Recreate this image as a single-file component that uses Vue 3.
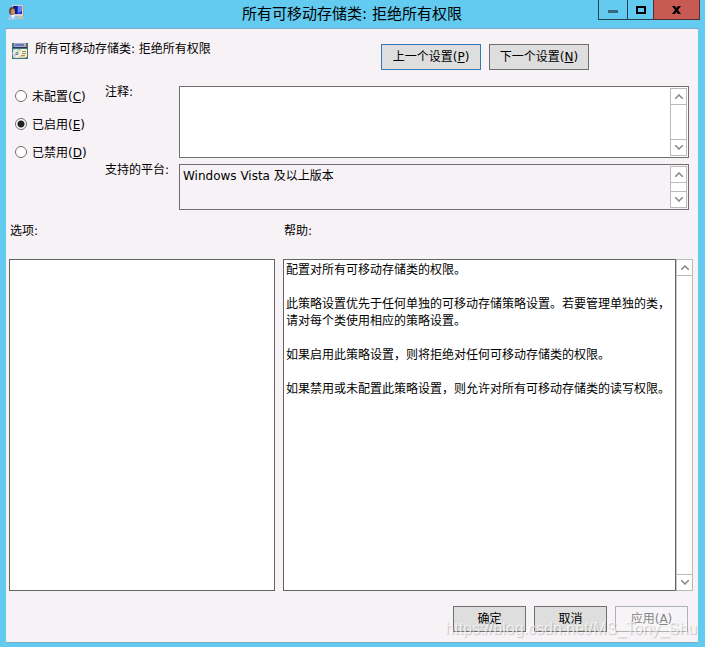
<template>
  <div class="window">
    <header class="title-bar">
      <svg class="app-icon" width="17" height="16" viewBox="0 0 17 16" aria-hidden="true">
        <path d="M4 0h12v11H4z" fill="#d8d2cc" />
        <path d="M15 0h1v11h-1z" fill="#a9a39f" />
        <path d="M5 1h9v8H5z" fill="#1a37d2" />
        <path d="M10 1h4v5l-4 2z" fill="#5a85f0" />
        <path d="M5 1h4v8H5z" fill="#0a1790" />
        <path d="M10 11h4v1h2v2H9z" fill="#c9beb2" />
        <path d="M0 15c0-3 1-5 4-5s5 2 5 5z" fill="#9cc6ee" />
        <path d="M3 10l2 4 2-4z" fill="#f2f8fd" />
        <ellipse cx="4" cy="6" rx="3" ry="4" fill="#6a4a30" />
        <ellipse cx="5" cy="7" rx="2" ry="3" fill="#c8935f" />
      </svg>
      <h1 class="title">{{ policyName }}</h1>
      <div class="window-controls">
        <button type="button" class="control minimize" aria-label="最小化">
          <svg width="10" height="3" viewBox="0 0 10 3"><path d="M0 0h10v3H0z" fill="#36677b" /></svg>
        </button>
        <button type="button" class="control maximize" aria-label="最大化">
          <svg width="10" height="8" viewBox="0 0 10 8"><path d="M1 1h8v6H1z" fill="none" stroke="#000" stroke-width="2" /></svg>
        </button>
        <button type="button" class="control close" aria-label="关闭">
          <svg width="9" height="8" viewBox="0 0 9 8"><path d="M0 0h3l1.500 2L6 0h3L6 4l3 4H6L4.500 6 3 8H0l3-4z" fill="#000" /></svg>
        </button>
      </div>
    </header>

    <main class="client">
      <div class="heading">
        <svg class="policy-icon" width="16" height="16" viewBox="0 0 16 16" aria-hidden="true">
          <path d="M0 0h16v16H0z" fill="#3d7580" />
          <path d="M2 0h12v4H2z" fill="#a7a9c9" />
          <path d="M3 1h9v2H3z" fill="#6679c2" />
          <path d="M12 1h2v2h-2z" fill="#d9b45c" />
          <path d="M1 4h14v1H1z" fill="#28365c" />
          <path d="M1 6h13v9H1z" fill="#b9c2bd" />
          <circle cx="5" cy="10.500" r="4.500" fill="#e9ece9" />
          <path d="M5 6a4.500 4.500 0 0 1 3 1L5 10z" fill="#b9dca4" />
          <path d="M1 12l4-2-2 4z" fill="#cfc3e0" />
          <circle cx="5" cy="10.500" r="1.500" fill="#6c7f77" />
          <circle cx="5" cy="10.500" r=".5" fill="#fff" />
          <path d="M9 6h6v8H8v-2h1z" fill="#fbf3cf" />
          <path d="M10 8.500h4M10 10.500h4M9 12.500h4" stroke="#9a8a5a" />
          <path d="M7 13h6v2H7z" fill="#e3d3a0" />
        </svg>
        <span class="policy-name">{{ policyName }}</span>
        <div class="nav-buttons">
          <button type="button" class="btn nav focused">上一个设置(<u>P</u>)</button>
          <button type="button" class="btn nav">下一个设置(<u>N</u>)</button>
        </div>
      </div>

      <div class="settings">
        <div class="states" role="radiogroup" aria-label="状态">
          <label v-for="item in states" :key="item.value" class="state">
            <input v-model="state" type="radio" name="state" :value="item.value" />
            <span>{{ item.label }}(<u>{{ item.key }}</u>)</span>
          </label>
        </div>

        <label class="field-label" for="comment">注释:</label>
        <div class="field comment">
          <textarea id="comment" v-model="comment"></textarea>
          <div class="scrollbar">
            <button type="button" aria-label="向上滚动"><svg width="8" height="5" viewBox="0 0 8 5"><path d="M0 5l4-4 4 4" /></svg></button>
            <button type="button" aria-label="向下滚动"><svg width="8" height="5" viewBox="0 0 8 5"><path d="M0 0l4 4 4-4" /></svg></button>
          </div>
        </div>

        <label class="field-label" for="platform">支持的平台:</label>
        <div class="field platform">
          <textarea id="platform" readonly :value="platform"></textarea>
          <div class="scrollbar">
            <button type="button" aria-label="向上滚动"><svg width="8" height="5" viewBox="0 0 8 5"><path d="M0 5l4-4 4 4" /></svg></button>
            <button type="button" aria-label="向下滚动"><svg width="8" height="5" viewBox="0 0 8 5"><path d="M0 0l4 4 4-4" /></svg></button>
          </div>
        </div>
      </div>

      <div class="panels">
        <section class="panel">
          <h2>选项:</h2>
          <div class="panel-row">
            <div class="box"></div>
          </div>
        </section>
        <section class="panel">
          <h2>帮助:</h2>
          <div class="panel-row">
            <div class="box help">
              <p v-for="(text, i) in helpText" :key="i">{{ text }}</p>
            </div>
            <div class="scrollbar outer">
              <button type="button" aria-label="向上滚动"><svg width="8" height="5" viewBox="0 0 8 5"><path d="M0 5l4-4 4 4" /></svg></button>
              <button type="button" aria-label="向下滚动"><svg width="8" height="5" viewBox="0 0 8 5"><path d="M0 0l4 4 4-4" /></svg></button>
            </div>
          </div>
        </section>
      </div>

      <footer class="actions">
        <button type="button" class="btn">确定</button>
        <button type="button" class="btn">取消</button>
        <button type="button" class="btn" disabled>应用(<u>A</u>)</button>
      </footer>
    </main>

    <div class="watermark">https://blog.csdn.net/MS_Tony_Shu</div>
  </div>
</template>

<script setup>
import { ref } from 'vue';

const policyName = '所有可移动存储类: 拒绝所有权限';
const platform = 'Windows Vista 及以上版本';

const states = [
  { value: 'none', label: '未配置', key: 'C' },
  { value: 'enabled', label: '已启用', key: 'E' },
  { value: 'disabled', label: '已禁用', key: 'D' },
];

const helpText = [
  '配置对所有可移动存储类的权限。',
  '此策略设置优先于任何单独的可移动存储策略设置。若要管理单独的类，请对每个类使用相应的策略设置。',
  '如果启用此策略设置，则将拒绝对任何可移动存储类的权限。',
  '如果禁用或未配置此策略设置，则允许对所有可移动存储类的读写权限。',
];

const state = ref('enabled');
const comment = ref('');
</script>

<style>
body {
  margin: 0;
}
</style>

<style scoped>
.window {
  position: relative;
  display: flex;
  flex-direction: column;
  box-sizing: border-box;
  min-height: 100vh;
  padding: 0 7px 4px 6px;
  background: #63caf0;
  color: #000;
  font-family: "DejaVu Sans", "Noto Sans CJK SC", sans-serif;
  font-size: 12px;
  line-height: 17px;
}

.window *,
.window *::before {
  box-sizing: border-box;
}

button,
textarea {
  margin: 0;
  font: inherit;
  color: inherit;
}

button {
  padding: 0;
}

/* Title bar */
.title-bar {
  display: grid;
  grid-template-columns: 104px 1fr 104px;
  height: 28px;
}

.app-icon {
  margin: 5px 0 0 2px;
}

.title {
  margin: 0;
  font-size: 15px;
  font-weight: 400;
  line-height: 28px;
  text-align: center;
  white-space: nowrap;
}

.window-controls {
  display: flex;
  justify-content: flex-end;
  height: 20px;
  margin-right: -2px;
}

.control {
  display: flex;
  align-items: center;
  justify-content: center;
  width: 29px;
  border: 1px solid #1f4351;
  border-top: 0;
  border-right: 0;
  background: #63caf0;
}

.maximize {
  width: 26px;
}

.minimize svg {
  margin-top: 4px;
}

.control.close {
  width: 47px;
  border: 1px solid #53302f;
  border-top: 0;
  background: #c75a52;
}

/* Client area */
.client {
  display: flex;
  flex: 1;
  flex-direction: column;
  border-top: 1px solid #7ba9c9;
  border-bottom: 1px solid #7ba9c9;
  background: #f7f2f6;
}

.heading {
  display: flex;
  align-items: flex-start;
  padding: 14px 109px 0 6px;
}

.policy-name {
  margin-left: 7px;
  line-height: 12px;
}

.nav-buttons {
  display: flex;
  gap: 8px;
  margin: 1px 0 0 auto;
}

.btn {
  width: 73px;
  height: 26px;
  padding-top: 1px;
  border: 1px solid #707070;
  background: #dedede;
}

.btn.nav {
  width: 100px;
}

.btn.focused {
  border-color: #337ab7;
}

.btn:disabled {
  border-color: #adb2b5;
  background: #f6f4f6;
  color: #858585;
}

.settings {
  display: grid;
  grid-template-columns: 99px 74px 1fr;
  row-gap: 6px;
  margin-top: 16px;
  padding-right: 9px;
}

.states {
  display: flex;
  grid-row: span 2;
  flex-direction: column;
  gap: 8px;
  padding-left: 9px;
}

.state {
  display: flex;
  align-items: center;
  gap: 5px;
  height: 20px;
}

.state span {
  padding-top: 2px;
}

.state input {
  width: 12px;
  height: 12px;
  margin: 0;
  border: 1px solid #707070;
  border-radius: 50%;
  background: #fff;
  appearance: none;
}

.state input:checked {
  background: radial-gradient(circle, #222 3px, #fff 4px);
}

.field-label {
  line-height: 12px;
}

.field {
  display: flex;
  padding: 1px;
  border: 1px solid #707070;
}

.comment {
  height: 72px;
  background: #fff;
}

.platform {
  height: 46px;
}

.field textarea {
  flex: 1;
  min-width: 0;
  padding: 2px 2px 0;
  border: 0;
  outline: 0;
  background: transparent;
  overflow: hidden;
  resize: none;
}

.scrollbar {
  display: flex;
  flex: none;
  flex-direction: column;
  justify-content: space-between;
  width: 17px;
  border: 1px solid #bababa;
  background: #fff;
}

.scrollbar button {
  display: flex;
  align-items: center;
  justify-content: center;
  height: 16px;
  border: 0;
  background: #fff;
}

.scrollbar button:first-child {
  border-bottom: 1px solid #bababa;
}

.scrollbar button:last-child {
  border-top: 1px solid #bababa;
}

.scrollbar path {
  fill: none;
  stroke: #858585;
  stroke-width: 1.5;
}

/* Options and help */
.panels {
  display: grid;
  flex: 1;
  grid-template-columns: 266fr 410fr;
  gap: 8px;
  padding: 13px 5px 0 3px;
}

.panel {
  display: flex;
  flex-direction: column;
  min-width: 0;
}

.panel h2 {
  margin: 0 0 19px;
  padding-left: 1px;
  font-size: 12px;
  font-weight: 400;
}

.panel-row {
  display: flex;
  flex: 1;
}

.box {
  flex: 1;
  border: 1px solid #646464;
  background: #fff;
}

.help {
  padding: 2px;
}

.help p {
  margin: 0 0 17px;
}

.scrollbar.outer {
  border-left-color: #c8c8c8;
}

.actions {
  display: flex;
  justify-content: flex-end;
  gap: 8px;
  padding: 15px 10px 10px;
}

.watermark {
  position: absolute;
  right: 8px;
  bottom: 8px;
  color: rgba(255, 255, 255, 0.7);
  font-family: "Liberation Sans", sans-serif;
  font-size: 16px;
  line-height: 20px;
  text-shadow: 1px 1px 1px rgba(0, 0, 0, 0.2);
  pointer-events: none;
}
</style>
